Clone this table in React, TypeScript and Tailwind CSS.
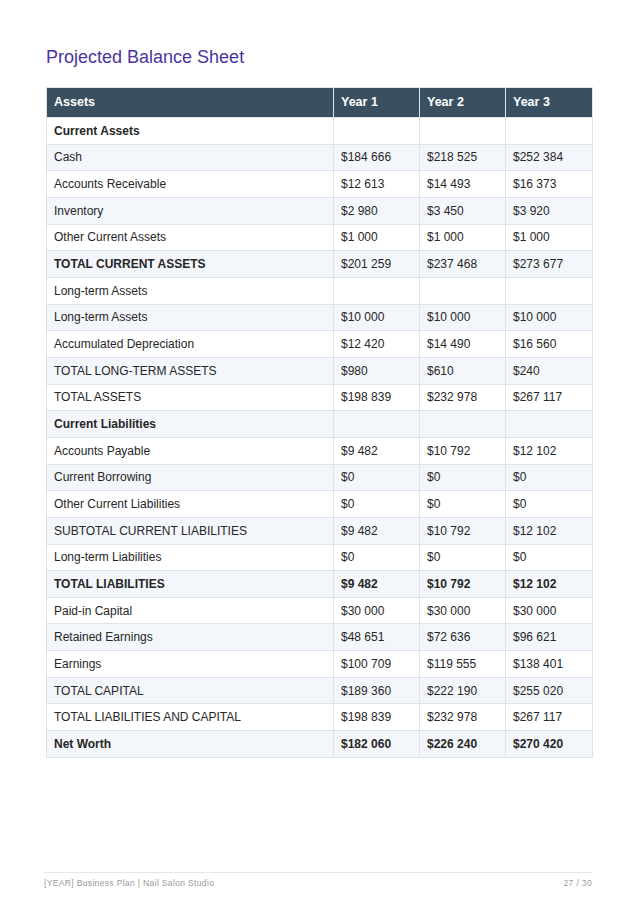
import React from "react";

type Row = { label: string; v: [string, string, string]; bold?: boolean; boldVals?: boolean };

const rows: Row[] = [
  { label: "Current Assets", v: ["", "", ""], bold: true },
  { label: "Cash", v: ["$184 666", "$218 525", "$252 384"] },
  { label: "Accounts Receivable", v: ["$12 613", "$14 493", "$16 373"] },
  { label: "Inventory", v: ["$2 980", "$3 450", "$3 920"] },
  { label: "Other Current Assets", v: ["$1 000", "$1 000", "$1 000"] },
  { label: "TOTAL CURRENT ASSETS", v: ["$201 259", "$237 468", "$273 677"], bold: true },
  { label: "Long-term Assets", v: ["", "", ""] },
  { label: "Long-term Assets", v: ["$10 000", "$10 000", "$10 000"] },
  { label: "Accumulated Depreciation", v: ["$12 420", "$14 490", "$16 560"] },
  { label: "TOTAL LONG-TERM ASSETS", v: ["$980", "$610", "$240"] },
  { label: "TOTAL ASSETS", v: ["$198 839", "$232 978", "$267 117"] },
  { label: "Current Liabilities", v: ["", "", ""], bold: true },
  { label: "Accounts Payable", v: ["$9 482", "$10 792", "$12 102"] },
  { label: "Current Borrowing", v: ["$0", "$0", "$0"] },
  { label: "Other Current Liabilities", v: ["$0", "$0", "$0"] },
  { label: "SUBTOTAL CURRENT LIABILITIES", v: ["$9 482", "$10 792", "$12 102"] },
  { label: "Long-term Liabilities", v: ["$0", "$0", "$0"] },
  { label: "TOTAL LIABILITIES", v: ["$9 482", "$10 792", "$12 102"], bold: true, boldVals: true },
  { label: "Paid-in Capital", v: ["$30 000", "$30 000", "$30 000"] },
  { label: "Retained Earnings", v: ["$48 651", "$72 636", "$96 621"] },
  { label: "Earnings", v: ["$100 709", "$119 555", "$138 401"] },
  { label: "TOTAL CAPITAL", v: ["$189 360", "$222 190", "$255 020"] },
  { label: "TOTAL LIABILITIES AND CAPITAL", v: ["$198 839", "$232 978", "$267 117"] },
  { label: "Net Worth", v: ["$182 060", "$226 240", "$270 420"], bold: true, boldVals: true },
];

export default function App() {
  return (
    <div
      className="w-[638px] h-[903px] bg-white relative flex flex-col"
      style={{ fontFamily: '"Liberation Sans", Arial, sans-serif' }}
    >
      <div className="pl-[46px] pr-[46px] pt-[45px]">
        <h1 className="text-[18px] leading-[24px] text-[#4a35a0] font-normal">Projected Balance Sheet</h1>
        <table className="mt-[18px] w-[546px] border-collapse table-fixed text-[12px] text-[#262626]">
          <colgroup>
            <col className="w-[287px]" />
            <col className="w-[86px]" />
            <col className="w-[86px]" />
            <col className="w-[87px]" />
          </colgroup>
          <thead>
            <tr className="bg-[#3a5061] text-white h-[30px]">
              {["Assets", "Year 1", "Year 2", "Year 3"].map((h) => (
                <th key={h} className="text-left font-bold px-[7px] border border-[#dde3ea] text-[12.5px]">
                  {h}
                </th>
              ))}
            </tr>
          </thead>
          <tbody>
            {rows.map((r, i) => (
              <tr key={i} className={`h-[26.67px] ${i % 2 === 1 ? "bg-[#f3f6fa]" : "bg-white"}`}>
                <td className={`px-[7px] border border-[#dde3ea] ${r.bold ? "font-bold" : ""}`}>{r.label}</td>
                {r.v.map((v, j) => (
                  <td key={j} className={`px-[7px] border border-[#dde3ea] ${r.boldVals ? "font-bold" : ""}`}>
                    {v}
                  </td>
                ))}
              </tr>
            ))}
          </tbody>
        </table>
      </div>
      <div className="absolute left-[44px] right-[46px] top-[872px] border-t border-[#e6e6e6] pt-[4px] flex justify-between text-[8.5px] tracking-[0.35px] text-[#999]">
        <span>[YEAR] Business Plan | Nail Salon Studio</span>
        <span>27 / 30</span>
      </div>
    </div>
  );
}
